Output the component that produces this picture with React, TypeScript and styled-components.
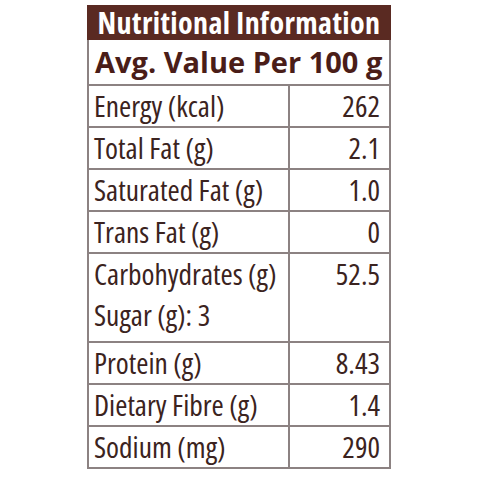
import styled, { createGlobalStyle } from "styled-components"

type Nutrient = {
    name: string;
    value: string;
    extra?: string;
}

const nutrients: Nutrient[] = [
    { name: 'Energy (kcal)', value: '262' },
    { name: 'Total Fat (g)', value: '2.1' },
    { name: 'Saturated Fat (g)', value: '1.0' },
    { name: 'Trans Fat (g)', value: '0' },
    { name: 'Carbohydrates (g)', value: '52.5', extra: 'Sugar (g): 3' },
    { name: 'Protein (g)', value: '8.43' },
    { name: 'Dietary Fibre (g)', value: '1.4' },
    { name: 'Sodium (mg)', value: '290' },
]

export default function App() {
    return <Page>
        <GlobalStyle />
        <Label>
            <Title>Nutritional Information</Title>
            <Grid>
                <Subtitle>Avg. Value Per 100 g</Subtitle>
                {nutrients.map(n => (
                    <Row key={n.name}>
                        <NameCell>
                            <Line>{n.name}</Line>
                            {n.extra && <Line>{n.extra}</Line>}
                        </NameCell>
                        <ValueCell>
                            <Line>{n.value}</Line>
                        </ValueCell>
                    </Row>
                ))}
            </Grid>
        </Label>
    </Page>
}

const GlobalStyle = createGlobalStyle`
    body {
        margin: 0;
        background: #ffffff;
        font-family: "Open Sans", "Liberation Sans", sans-serif;
        font-stretch: 75%;
    }
`;

const Page = styled.div`
    width: 480px;
    height: 480px;
    padding: 5px 0 0 87px;
    box-sizing: border-box;
`;

const Label = styled.div`
    width: 304px;
    display: flex;
    flex-direction: column;
    color: #3b2320;
`;

const Title = styled.div`
    height: 35px;
    background: #5a2a22;
    color: #ffffff;
    font-size: 30px;
    font-weight: 700;
    letter-spacing: 0.4px;
    line-height: 35px;
    text-align: center;
    white-space: nowrap;
`;

const Grid = styled.div`
    display: grid;
    grid-template-columns: 199px 99px;
    gap: 2px;
    padding: 0 2px 2px 2px;
    background: #8c8282;
`;

const Subtitle = styled.div`
    grid-column: 1 / -1;
    height: 44px;
    padding-left: 6px;
    background: #ffffff;
    color: #4a1d18;
    font-size: 29px;
    font-weight: 700;
    font-stretch: 100%;
    line-height: 44px;
    white-space: nowrap;
`;

const Row = styled.div`
    display: contents;
`;

const NameCell = styled.div`
    padding-left: 5px;
    background: #ffffff;
    font-size: 29.5px;
`;

const ValueCell = styled.div`
    padding-right: 9px;
    background: #ffffff;
    text-align: right;
    font-size: 29.5px;
`;

const Line = styled.div`
    height: 40px;
    line-height: 40px;
    white-space: nowrap;

    & + & {
        height: 47px;
        line-height: 42px;
    }
`;
